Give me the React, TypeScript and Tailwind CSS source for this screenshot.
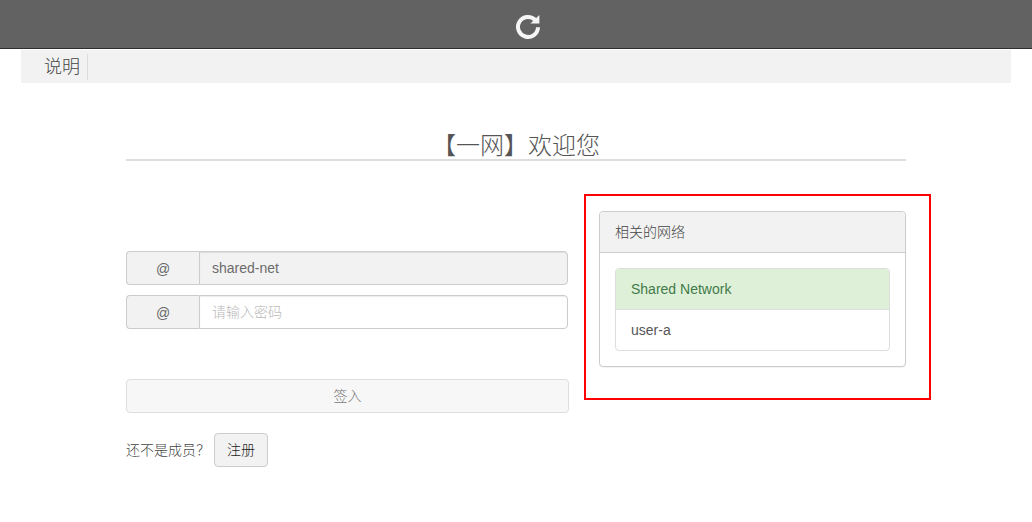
import { useState } from "react";

const networks = [
  { name: "Shared Network", active: true },
  { name: "user-a", active: false },
];

const ReloadIcon = () => (
  <svg width="26" height="26" viewBox="0 0 26 26" fill="none" aria-hidden="true">
    <path d="M23 13.2A10 10 0 1 1 20.2 6" stroke="#f5f5f5" strokeWidth="4" />
    <path d="M24.4 1V9.6H15.4Z" fill="#f5f5f5" />
  </svg>
);

const LoginForm = () => {
  const [password, setPassword] = useState("");

  return (
    <form className="flex-1 min-w-0 pt-10" onSubmit={(e) => e.preventDefault()}>
      <div className="flex h-[34px] mb-2.5 mr-px">
        <label
          htmlFor="account"
          className="w-[73px] shrink-0 flex items-center justify-center pt-0.5 bg-[#f2f2f2] border border-r-0 border-[#ccc] rounded-l"
        >
          @
        </label>
        <input
          id="account"
          type="text"
          value="shared-net"
          readOnly
          className="flex-1 min-w-0 px-3 bg-[#f2f2f2] border border-[#ccc] rounded-r shadow-[inset_0_1px_1px_rgba(0,0,0,0.08)] outline-none text-[#6b6b6b]"
        />
      </div>

      <div className="flex h-[34px] mb-[50px] mr-px">
        <label
          htmlFor="password"
          className="w-[73px] shrink-0 flex items-center justify-center pt-0.5 bg-[#f2f2f2] border border-r-0 border-[#ccc] rounded-l"
        >
          @
        </label>
        <input
          id="password"
          type="password"
          value={password}
          onChange={(e) => setPassword(e.target.value)}
          placeholder="请输入密码"
          className="flex-1 min-w-0 px-3 bg-white border border-[#ccc] rounded-r shadow-[inset_0_1px_1px_rgba(0,0,0,0.08)] outline-none placeholder:text-[#b8b8b8] placeholder:font-light"
        />
      </div>

      <button
        type="submit"
        disabled
        className="block w-full h-[34px] bg-[#f7f7f7] border border-[#ddd] rounded font-light text-[#777]"
      >
        签入
      </button>

      <div className="flex items-center mt-5 text-[#444]">
        <span className="font-light">还不是成员？</span>
        <button
          type="button"
          className="h-[34px] px-3 ml-1 bg-[#f2f2f2] border border-[#ccc] rounded font-light text-[#222] cursor-pointer"
        >
          注册
        </button>
      </div>
    </form>
  );
};

const NetworkPanel = () => (
  <aside className="relative self-start w-[307px] shrink-0">
    <div className="border border-[#ccc] rounded bg-white shadow-[0_1px_1px_rgba(0,0,0,0.05)]">
      <h2 className="px-[15px] leading-10 border-b border-[#ccc] rounded-t bg-[#f2f2f2] font-light text-[#444]">
        相关的网络
      </h2>
      <div className="p-[15px]">
        <ul className="border border-[#ddd] rounded overflow-hidden">
          {networks.map((network) => (
            <li key={network.name} className="border-b border-[#ddd] last:border-b-0">
              <a
                href="#"
                className={
                  network.active
                    ? "block px-[15px] py-2.5 leading-5 bg-[#dff0d8] text-[#3f7a4a]"
                    : "block px-[15px] py-2.5 leading-5 text-[#555]"
                }
              >
                {network.name}
              </a>
            </li>
          ))}
        </ul>
      </div>
    </div>

    {/* Highlight frame around the panel */}
    <div className="absolute -top-[17px] -bottom-[33px] -left-[15px] -right-[25px] border-2 border-[#f00] pointer-events-none" />
  </aside>
);

const App = () => {
  return (
    <div className="min-h-screen bg-white text-sm text-[#666] font-['Liberation_Sans','Noto_Sans_CJK_SC',sans-serif]">
      <header className="h-[49px] flex justify-center items-center pt-1.5 pl-6 bg-[#626262] border-b border-[#2e2e2e]">
        <button type="button" aria-label="刷新" className="cursor-pointer">
          <ReloadIcon />
        </button>
      </header>

      <nav className="mx-[21px] mt-px h-[33px] flex items-center bg-[#f2f2f2]">
        <a
          href="#"
          className="h-[26px] flex items-center pl-[23px] pr-[7px] border-r border-[#ddd] text-lg font-light text-[#444]"
        >
          说明
        </a>
      </nav>

      <main className="w-full max-w-[780px] mx-auto mt-12">
        <h1 className="h-[30px] leading-[30px] text-center text-2xl font-light text-[#555] border-b-2 border-[#ddd]">
          【一网】欢迎您
        </h1>
        <div className="flex gap-[30px] mt-[50px]">
          <LoginForm />
          <NetworkPanel />
        </div>
      </main>
    </div>
  );
};

export default App;
